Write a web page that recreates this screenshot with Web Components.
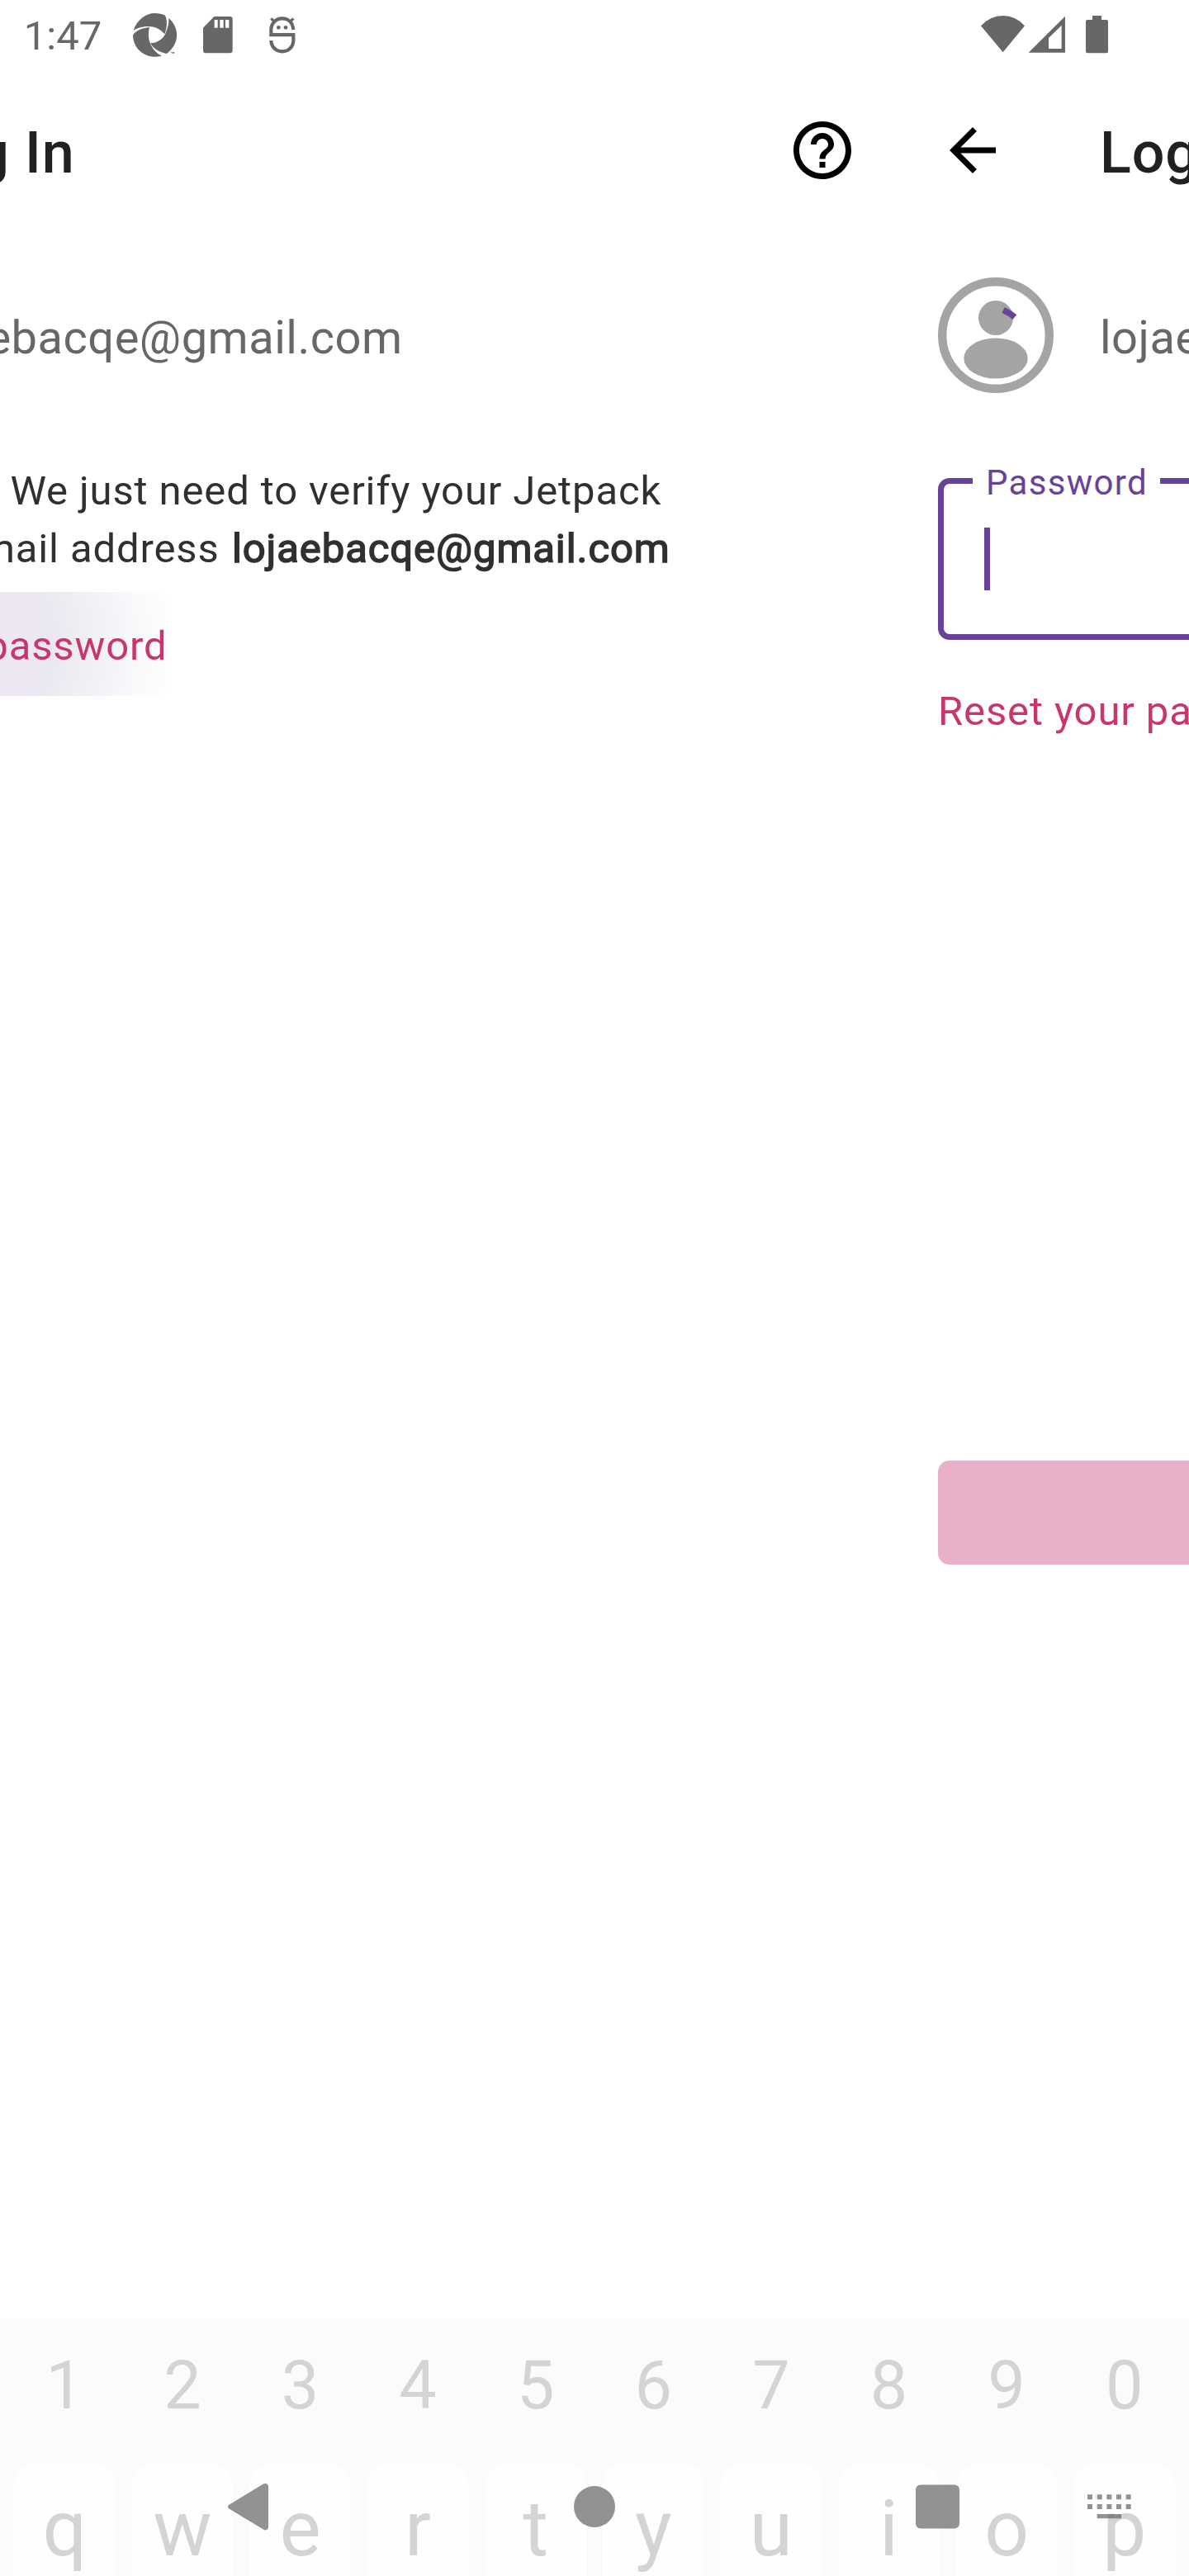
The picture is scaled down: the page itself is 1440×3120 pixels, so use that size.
<!DOCTYPE html>
<html lang="en">
<head>
<meta charset="utf-8">
<title>Log In</title>
<style>
html,body{margin:0;padding:0}
body{width:1440px;height:3120px;overflow:hidden;background:#fff;font-family:Roboto,"Liberation Sans",sans-serif}
</style>
</head>
<body>
<phone-screen>
  <status-bar slot="status"></status-bar>
  <login-pane>
    <tool-bar slot="bar" help>Log In</tool-bar>
    <account-row slot="account">lojaebacqe@gmail.com</account-row>
    <verify-message>Almost there! We just need to verify your Jetpack<span slot="second">connected email address <b-mail>lojaebacqe@gmail.com</b-mail></span></verify-message>
    <text-link pressed>Or type your password</text-link>
  </login-pane>
  <login-pane>
    <tool-bar slot="bar">Log In</tool-bar>
    <account-row slot="account">lojaebacqe@gmail.com</account-row>
    <password-field>Password</password-field>
    <text-link class="reset">Reset your password</text-link>
    <continue-button></continue-button>
  </login-pane>
  <key-board slot="keyboard"></key-board>
  <nav-bar slot="nav"></nav-bar>
</phone-screen>
<script>
const define = (name, html, setup) => {
  const t = document.createElement('template');
  t.innerHTML = html;
  customElements.define(name, class extends HTMLElement {
    constructor() {
      super();
      this.attachShadow({ mode: 'open' }).append(t.content.cloneNode(true));
      if (setup) setup(this, this.shadowRoot);
    }
  });
};

define('phone-screen', `
<style>
:host{display:flex;flex-direction:column;position:relative;width:1440px;height:3120px;overflow:hidden}
.panes{display:flex;flex:1;margin-left:-360px;width:2880px;min-height:0}
</style>
<slot name="status"></slot>
<div class="panes"><slot></slot></div>
<slot name="keyboard"></slot>
<slot name="nav"></slot>`);

define('status-bar', `
<style>
:host{display:flex;align-items:center;height:88px;flex:none;color:#676767;font-size:49px;line-height:60px;padding-left:28.800px}
.time{width:131.200px}
svg{display:block;height:60px;fill:currentColor;overflow:visible}
</style>
<span class="time">1:47</span>
<svg width="54" viewBox="480 42 162 180"><path d="M485 111C497 72 530 48 562 48C577 48 590 51 600 56C609 75 607 100 598 124C580 102 555 93 525 97C508 99 495 104 485 111Z"/><path d="M613 66C650 98 657 155 606 195C580 190 560 180 546 157C575 155 593 140 601 122C610 100 614 86 613 66Z"/><path d="M483 128C490 114 515 101 543 99C537 125 540 145 548 163C556 180 570 195 588 203C534 218 483 180 483 128Z"/><path d="M621 189h5v5h-2v-3h-3zM628 189h5v5h-5z"/></svg>
<svg width="36" viewBox="739 42 108 180" style="margin-left:32.3px"><path fill-rule="evenodd" d="M779 60H836q10 0 10 10V183q0 10-10 10H749q-10 0-10-10V101ZM780 72v29h12v-29ZM800 72v29h13v-29ZM820 72v29h13v-29Z"/></svg>
<svg width="32" viewBox="977 42 96 180" style="margin-left:43.4px"><path d="M1065 108C1062 80 1045 67 1024.500 67C1002 67 984 84 984 108V126.500H1065V147C1065 170 1047 187 1024.500 187C1002 187 984 170 984 147" fill="none" stroke="currentColor" stroke-width="12.500"/><path d="M984 67l12 12M1065 67l-12 12" stroke="currentColor" stroke-width="10"/><circle cx="1011" cy="100" r="7"/><circle cx="1037" cy="100" r="7"/></svg>
<svg width="53" viewBox="744 42 159 180" style="margin-left:830.300px"><path d="M824 190L744 94Q778 57 824 57Q870 57 903 94Z"/></svg>
<svg width="44" viewBox="917 42 132 180" style="margin-left:4.700px"><path fill-rule="evenodd" d="M916 191L1049 59V191ZM989 138V177H1036V92Z"/></svg>
<svg width="27" viewBox="1125 42 81 180" style="margin-left:25.300px"><path d="M1149 57h33v15h18q6 0 6 6v109q0 6-6 6h-69q-6 0-6-6v-109q0-6 6-6h18z"/></svg>`);

define('login-pane', `
<style>
:host{display:flex;flex-direction:column;width:1440px;flex:none}
.body{display:flex;flex-direction:column;padding:0 56px}
</style>
<slot name="bar"></slot><slot name="account"></slot>
<div class="body"><slot></slot></div>`);

define('tool-bar', `
<style>
:host{display:flex;align-items:center;height:188px;padding:0 42px 0 56px;color:#212121;font-size:70px;font-weight:500;line-height:82px;letter-spacing:.875px}
.title{flex:1;margin-left:112px;padding-top:6px}
svg{display:block;width:84px;height:84px;fill:#000}
</style>
<svg viewBox="0 0 24 24"><path d="M20 11H7.830l5.590-5.590L12 4l-8 8 8 8 1.410-1.410L7.830 13H20v-2z"/></svg>
<span class="title"><slot></slot></span>
<svg class="help" viewBox="0 0 24 24"><path d="M11 18h2v-2h-2v2zm1-16C6.480 2 2 6.480 2 12s4.480 10 10 10 10-4.480 10-10S17.520 2 12 2zm0 18c-4.410 0-8-3.590-8-8s3.590-8 8-8 8 3.590 8 8-3.590 8-8 8zm0-14c-2.210 0-4 1.790-4 4h2c0-1.100.9-2 2-2s2 .9 2 2c0 2-3 1.750-3 5h2c0-2.250 3-2.500 3-5 0-2.210-1.790-4-4-4z"/></svg>`);

define('account-row', `
<style>
:host{display:flex;align-items:center;height:140px;margin-top:60px;padding-left:56px;gap:56px;color:#676767;font-size:56px;line-height:66px;letter-spacing:.5px;white-space:nowrap}
svg{display:block;width:140px;height:140px}
span{padding-top:6px}
</style>
<svg viewBox="0 0 140 140"><g fill="#a4a4a4"><circle cx="70" cy="70" r="64.800" fill="none" stroke="#a4a4a4" stroke-width="10.400"/><circle cx="70" cy="49" r="21"/><ellipse cx="70" cy="98" rx="38.700" ry="24.500"/></g><path d="M80.700 36.300Q88.500 39.300 95.300 45.300L90.400 50.900Q85 46 77.500 42.900Z" fill="#674399"/></svg>
<span><slot></slot></span>`);

define('verify-message', `
<style>
:host{display:flex;flex-direction:column;margin-top:84px;color:#303030;font-size:49px;line-height:70px;letter-spacing:.875px;white-space:nowrap}
.second{margin-left:2.200px}
</style><div><slot></slot></div><div class="second"><slot name="second"></slot></div>`);

define('b-mail', `
<style>
:host{display:inline;margin-left:2.200px;letter-spacing:.925px;-webkit-text-stroke:1.530px currentColor}
</style><slot></slot>`);

define('text-link', `
<style>
:host{display:flex;align-items:center;align-self:flex-start;box-sizing:border-box;height:126px;margin-top:17px;padding-top:5px;border-radius:14px;color:#c9356e;font-size:49px;line-height:58px;letter-spacing:.875px;white-space:nowrap}
:host([pressed]){width:506px;padding-left:1px;background:radial-gradient(circle at 253px 63px,#eee6f3 0,#eee7f3 60px,#ebe8f2 115px,#f0edf3 150px,#f6f4f9 195px,#fafafc 225px,#fdfdfd 253px)}
:host(.reset){margin-top:21px}
</style><slot></slot>`);

define('password-field', `
<style>
:host{display:block;position:relative;box-sizing:border-box;height:196px;margin-top:103px;border:7px solid #674399;border-radius:14px;padding:53px 49px}
.label{position:absolute;left:35px;top:-26px;box-sizing:border-box;width:227px;padding-left:16px;background:#fff;color:#674399;font-size:42px;line-height:50px;letter-spacing:1.300px;white-space:nowrap}
.caret{width:7px;height:76px;background:#674399}
</style>
<span class="label"><slot></slot></span><div class="caret"></div>`);

define('continue-button', `
<style>
:host{display:block;height:126px;margin-top:847px;border-radius:14px;background:#e8b1c9}
</style>`);

define('key-board', `
<style>
:host{display:flex;flex-direction:column;flex:none;height:312px;background:#fbfbfb;color:#d4d4d4;overflow:hidden}
.row{display:grid;flex:none;grid-template-columns:repeat(10,1fr);column-gap:20px;padding:0 17px;text-align:center}
.digits{height:176px;font-size:81px;line-height:164px}
.letters{font-size:94.500px;line-height:158px}
.letters span{height:200px;background:#fefefe;border-radius:25px}
</style>
<div class="row digits"></div><div class="row letters"></div>`, (host, root) => {
  const fill = (sel, chars) => root.querySelector(sel).append(...[...chars].map(c => {
    const s = document.createElement('span');
    s.textContent = c;
    return s;
  }));
  fill('.digits', '1234567890');
  fill('.letters', 'qwertyuiop');
});

define('nav-bar', `
<style>
:host{display:flex;align-items:center;position:absolute;left:0;right:0;bottom:0;height:168px;padding-left:276px;opacity:.67}
svg{display:block;height:60px;fill:#5e5e5e;flex:none}
</style>
<svg width="49" viewBox="828 678 147 180"><path d="M831 762L958 685Q962 683 966 684Q975 686 975 695V842Q975 851 966 853Q962 854 958 851L831 775Q825 768 831 762Z"/></svg>
<svg width="50" viewBox="0 -5 50 60" style="margin-left:370px"><circle cx="25" cy="25" r="25"/></svg>
<svg width="53" viewBox="0 -3.500 53 60" style="margin-left:363.500px"><rect width="53" height="53" rx="6"/></svg>
<svg width="53" viewBox="1070 678 159 180" style="margin-left:155px"><path d="M1070 724h18v18h-18zM1105 724h18v18h-18zM1140 724h18v18h-18zM1175 724h18v18h-18zM1210 724h18v18h-18zM1070 759h18v18h-18zM1105 759h18v18h-18zM1140 759h18v18h-18zM1175 759h18v18h-18zM1210 759h18v18h-18zM1105 795h88v16h-88z"/></svg>`);

// The help action is only offered on panes that ask for it.
document.querySelectorAll('tool-bar:not([help])').forEach(b => b.shadowRoot.querySelector('.help').remove());
</script>
</body>
</html>
